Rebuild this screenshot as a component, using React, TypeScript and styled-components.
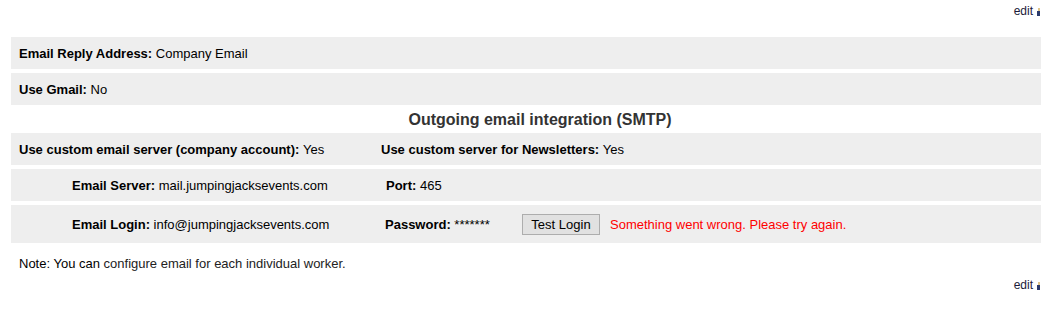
import styled, { createGlobalStyle } from 'styled-components'

const GlobalStyle = createGlobalStyle`
  html, body {
    margin: 0;
    padding: 0;
    background: #ffffff;
    overflow: hidden;
  }
  body {
    font-family: 'Liberation Sans', Arial, sans-serif;
    font-size: 13px;
    color: #000;
  }
`

const Page = styled.div`
  width: 1041px;
  padding-left: 11px;
  box-sizing: border-box;
`

const EditBar = styled.div<{ $top: number }>`
  display: flex;
  justify-content: flex-end;
  align-items: center;
  gap: 4px;
  height: 15px;
  margin-top: ${({ $top }) => $top}px;
  font-size: 12px;
  line-height: 15px;
`

const EditLink = styled.a`
  color: #1b1b3a;
  text-decoration: none;
  cursor: pointer;
`

const Rows = styled.div<{ $top?: number }>`
  display: flex;
  flex-direction: column;
  gap: 4px;
  margin-top: ${({ $top }) => $top ?? 0}px;
`

const Row = styled.div<{ $height?: number }>`
  display: flex;
  align-items: center;
  height: ${({ $height }) => $height ?? 32}px;
  padding-left: 8px;
  background: #eeeeee;
  box-sizing: border-box;
`

const PairRow = styled(Row)<{ $indent: number; $firstCol: number }>`
  display: grid;
  grid-template-columns: ${({ $firstCol }) => $firstCol}px 1fr;
  padding-left: ${({ $indent }) => $indent}px;
`

const Cell = styled.div`
  display: flex;
  align-items: center;
  white-space: nowrap;
`

const Field = styled.span<{ $width?: number }>`
  display: inline-block;
  width: ${({ $width }) => ($width ? `${$width}px` : 'auto')};
`

const Label = styled.b`
  font-weight: bold;
  color: #000;
`

const Title = styled.h3`
  margin: 0;
  height: 28px;
  padding-left: 28px;
  line-height: 29px;
  text-align: center;
  font-size: 16px;
  font-weight: bold;
  color: #333;
`

const TestButton = styled.button`
  height: 21px;
  width: 78px;
  padding: 0;
  border: 1px solid #adadad;
  background: #e1e1e1;
  font-family: 'Liberation Sans', Arial, sans-serif;
  font-size: 13px;
  color: #000;
`

const ErrorText = styled.span`
  margin-left: 10px;
  color: #ff0000;
`

const Note = styled.p`
  margin: 13px 0 0 8px;
  font-size: 13px;
  line-height: 15px;
  color: #000;
`

const NoteRest = styled.span`
  color: #222;
`

const EditIcon = () => (
  <svg width="4" height="8" viewBox="0 0 4 8">
    <rect x="1" y="0" width="2" height="3" fill="#e0c58a" />
    <rect x="0" y="3" width="3" height="5" fill="#2b3a6b" />
  </svg>
)

const Edit = ({ top }: { top: number }) => (
  <EditBar $top={top}>
    <EditLink>edit</EditLink>
    <EditIcon />
  </EditBar>
)

export default function App() {
  return (
    <>
      <GlobalStyle />
      <Page>
        <Edit top={4} />
        <Rows $top={18}>
          <Row>
            <Cell>
              <Label>Email Reply Address:</Label>&nbsp;Company Email
            </Cell>
          </Row>
          <Row>
            <Cell>
              <Label>Use Gmail:</Label>&nbsp;No
            </Cell>
          </Row>
        </Rows>
        <Title>Outgoing email integration (SMTP)</Title>
        <Rows>
          <PairRow $indent={8} $firstCol={362}>
            <Cell>
              <Label>Use custom email server (company account):</Label>&nbsp;Yes
            </Cell>
            <Cell>
              <Label>Use custom server for Newsletters:</Label>&nbsp;Yes
            </Cell>
          </PairRow>
          <PairRow $indent={61} $firstCol={314}>
            <Cell>
              <Label>Email Server:</Label>&nbsp;mail.jumpingjacksevents.com
            </Cell>
            <Cell>
              <Label>Port:</Label>&nbsp;465
            </Cell>
          </PairRow>
          <PairRow $indent={61} $firstCol={313} $height={38}>
            <Cell>
              <Label>Email Login:</Label>&nbsp;info@jumpingjacksevents.com
            </Cell>
            <Cell>
              <Field $width={137}>
                <Label>Password:</Label>&nbsp;*******
              </Field>
              <TestButton>Test Login</TestButton>
              <ErrorText>Something went wrong. Please try again.</ErrorText>
            </Cell>
          </PairRow>
        </Rows>
        <Note>
          Note: You can <NoteRest>configure email for each individual worker.</NoteRest>
        </Note>
        <Edit top={7} />
      </Page>
    </>
  )
}
